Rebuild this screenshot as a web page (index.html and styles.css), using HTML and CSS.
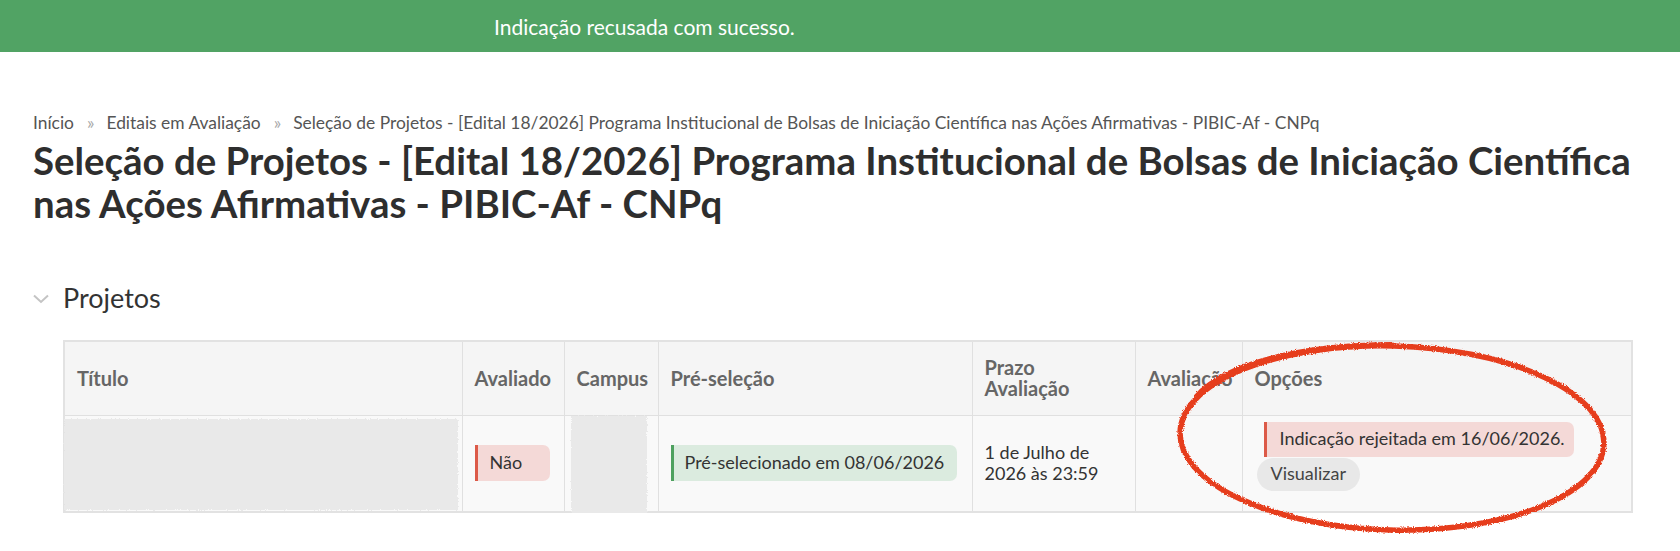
FILE: index.html
```html
<!DOCTYPE html>
<html lang="pt-BR">
<head>
<meta charset="utf-8">
<title>Seleção de Projetos</title>
<link rel="stylesheet" href="styles.css">
</head>
<body>
<div class="flash">
  <p class="flash-text">Indicação recusada com sucesso.</p>
</div>

<main class="page">
  <nav class="breadcrumb">
    <a href="#">Início</a><span class="sep">»</span><a href="#">Editais em Avaliação</a><span class="sep">»</span><span>Seleção de Projetos - [Edital 18/2026] Programa Institucional de Bolsas de Iniciação Científica nas Ações Afirmativas - PIBIC-Af - CNPq</span>
  </nav>
  <h1 class="title">Seleção de Projetos - [Edital 18/2026] Programa Institucional de Bolsas de Iniciação Científica nas Ações Afirmativas - PIBIC-Af - CNPq</h1>

  <section class="box">
    <h2 class="box-title">
      <svg class="chevron" width="16" height="10" viewBox="0 0 16 10"><polyline points="1,1.5 8,8 15,1.5" fill="none" stroke="#c4c4c4" stroke-width="2"/></svg>
      Projetos
    </h2>

    <div class="table-wrap">
      <table class="grid">
        <colgroup>
          <col class="c-titulo"><col class="c-avaliado"><col class="c-campus"><col class="c-pre"><col class="c-prazo"><col class="c-aval"><col class="c-opcoes">
        </colgroup>
        <thead>
          <tr>
            <th>Título</th>
            <th>Avaliado</th>
            <th>Campus</th>
            <th>Pré-seleção</th>
            <th>Prazo<br>Avaliação</th>
            <th>Avaliação</th>
            <th>Opções</th>
          </tr>
        </thead>
        <tbody>
          <tr>
            <td class="masked"><span class="redact redact-title"></span></td>
            <td><span class="tag tag-danger tag-short">Não</span></td>
            <td class="masked"><span class="redact redact-campus"></span></td>
            <td><span class="tag tag-success">Pré-selecionado em 08/06/2026</span></td>
            <td class="date">1 de Julho de<br>2026 às 23:59</td>
            <td></td>
            <td class="opts">
              <span class="tag tag-danger tag-note">Indicação rejeitada em 16/06/2026.</span>
              <a href="#" class="btn">Visualizar</a>
            </td>
          </tr>
        </tbody>
      </table>

      <svg class="mark" width="1680" height="551" viewBox="0 0 1680 551">
        <defs>
          <filter id="crayon" x="-5%" y="-5%" width="110%" height="110%">
            <feTurbulence type="fractalNoise" baseFrequency="0.9" numOctaves="2" seed="4" result="n"/>
            <feDisplacementMap in="SourceGraphic" in2="n" scale="3.5" xChannelSelector="R" yChannelSelector="G"/>
          </filter>
        </defs>
        <g filter="url(#crayon)" fill="none" stroke="#e63d1e" stroke-linecap="round">
          <ellipse cx="1392" cy="438" rx="212" ry="92" transform="rotate(1.5 1392 438)" stroke-width="5.5"/>
          <path d="M1196 396 C1224 364 1300 344 1392 344" stroke-width="4"/>
        </g>
      </svg>
    </div>
  </section>
</main>
</body>
</html>
```

FILE: styles.css
```css
* { box-sizing: border-box; }

html, body {
  margin: 0;
  padding: 0;
  background: #ffffff;
  font-family: Lato, "Noto Sans", "Liberation Sans", sans-serif;
  color: #333333;
}

a { color: inherit; text-decoration: none; }

/* success notice */
.flash {
  height: 52px;
  background: #51a364;
  display: flex;
  align-items: center;
  padding-left: 494px;
}
.flash-text {
  margin: 0;
  color: #ffffff;
  font-size: 21px;
}

.page {
  padding: 0 16px 0 33px;
}

/* breadcrumb */
.breadcrumb {
  margin-top: 60px;
  font-size: 17.4px;
  line-height: 22px;
  color: #555555;
}
.breadcrumb .sep {
  color: #a8a8a8;
  margin: 0 12px 0 13px;
}

.title {
  margin: 5px 0 0;
  font-size: 38.4px;
  line-height: 43px;
  font-weight: 700;
  color: #2e2e2e;
  max-width: 1620px;
}

/* collapsible box */
.box {
  margin-top: 57px;
}
.box-title {
  margin: 0;
  display: flex;
  align-items: center;
  gap: 14px;
  font-size: 27px;
  line-height: 32px;
  font-weight: 400;
  color: #333333;
}
.chevron { flex: none; margin-top: 2px; }

.table-wrap {
  margin: 26px 0 0 30px;
}

.grid {
  width: 1568px;
  table-layout: fixed;
  border-collapse: collapse;
  border: 2px solid #e2e2e2;
  font-size: 18px;
}
.c-titulo { width: 398px; }
.c-avaliado { width: 102px; }
.c-campus { width: 94px; }
.c-pre { width: 314px; }
.c-prazo { width: 163px; }
.c-aval { width: 107px; }
.c-opcoes { width: 390px; }

.grid th {
  background: #f5f5f5;
  height: 74px;
  padding: 0 12px;
  text-align: left;
  vertical-align: middle;
  font-size: 20px;
  font-weight: 700;
  color: #666666;
  line-height: 21.5px;
  white-space: nowrap;
  border: 1px solid #e0e0e0;
}
.grid td {
  background: #f9f9f9;
  height: 92px;
  padding: 0 12px;
  vertical-align: middle;
  border: 1px solid #e0e0e0;
  line-height: 21.5px;
  color: #333333;
}

/* redacted cells */
.grid td.masked { position: relative; padding: 0; }
.redact {
  position: absolute;
  background: #e9e9e9;
  filter: url(#crayon);
}
.redact-title { left: -1px; right: 4px; top: 3px; bottom: 1px; }
.redact-campus { left: 6px; right: 11px; top: 0; bottom: -4px; }

/* status tags */
.tag {
  display: inline-flex;
  align-items: center;
  height: 36px;
  padding: 0 13px 0 11px;
  border-left: 3px solid;
  border-radius: 0 7px 7px 0;
  color: #333333;
  white-space: nowrap;
}
.tag-danger {
  background: #f4d9d7;
  border-left-color: #dc5a48;
}
.tag-success {
  background: #dbebdf;
  border-left-color: #4ea15f;
}
.tag-short {
  width: 75px;
  padding-left: 12px;
}

.opts {
  white-space: nowrap;
}
.grid td.opts { padding: 6px 12px 20px 14px; vertical-align: top; }
.tag-note {
  height: 35px;
  margin-left: 7px;
  padding-left: 13px;
  padding-right: 9px;
}
.btn {
  display: flex;
  width: max-content;
  align-items: center;
  height: 33px;
  margin-top: 1px;
  padding: 0 14px;
  border-radius: 17px;
  background: #e8e8e8;
  color: #444444;
}

/* pen mark drawn over the options column */
.mark {
  position: absolute;
  left: 0;
  top: 0;
  pointer-events: none;
}
```
